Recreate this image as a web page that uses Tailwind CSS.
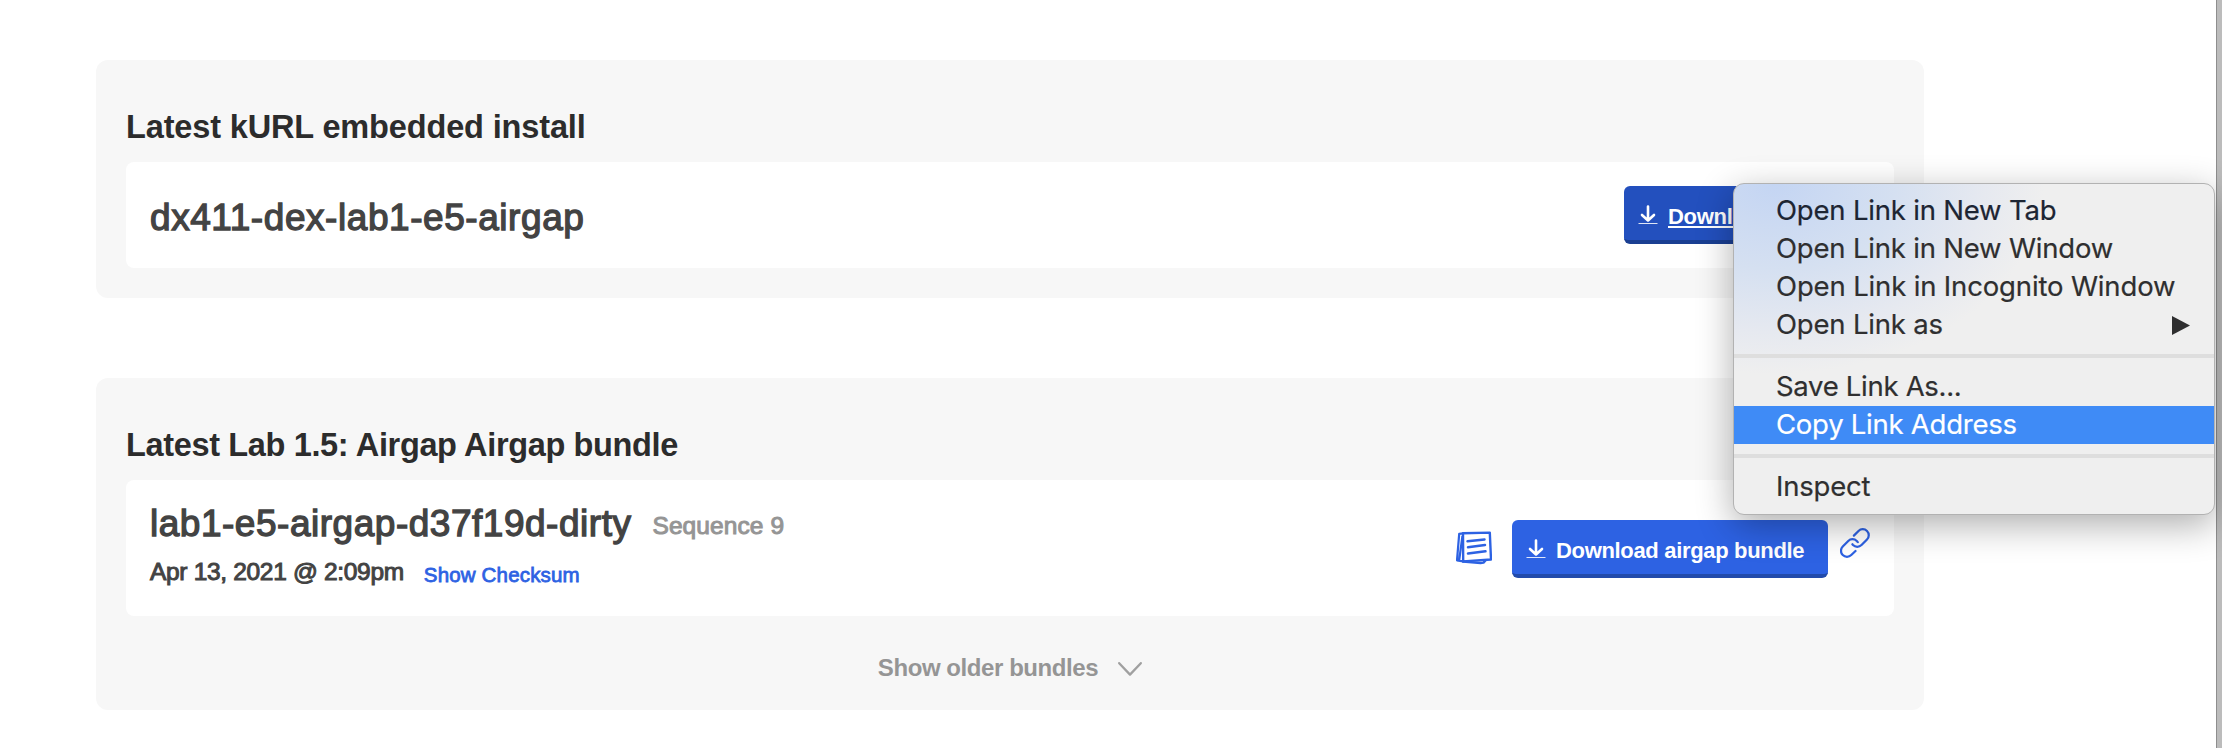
<!DOCTYPE html>
<html lang="en">
<head>
<meta charset="utf-8">
<title>Downloads</title>
<script src="https://cdn.jsdelivr.net/npm/@tailwindcss/browser@4"></script>
</head>
<body class="relative flex h-[748px] w-[2222px] justify-between overflow-hidden bg-white font-['Liberation_Sans',Arial,sans-serif]">

<main class="flex flex-col gap-20 pl-24 pt-[60px]">
  <section class="h-[238px] w-[1828px] rounded-xl bg-[#f7f7f7] px-[30px] pt-[47px]">
    <h2 class="mb-[15px] whitespace-nowrap text-[32.5px] leading-10 font-bold tracking-[-0.14px] text-[#2c2c2c]">Latest kURL embedded install</h2>
    <div class="flex h-[106px] items-center justify-between rounded-lg bg-white px-6">
      <span class="pt-1.5 whitespace-nowrap text-[37px] leading-[44px] tracking-[0.56px] text-[#434343] [-webkit-text-stroke:1.3px_#434343]">dx411-dex-lab1-e5-airgap</span>
      <a class="flex h-[58px] w-[246px] items-center gap-2.5 rounded-md border-b-4 border-[#1a3f92] bg-[#2350be] pl-3.5 text-white">
        <svg class="mt-1 h-5 w-5 shrink-0" viewBox="0 0 20 20" fill="none" stroke="#fff"><path d="M10 1.5v13M4 10l6 5.5 6-5.5" stroke-width="2.6" stroke-linecap="round" stroke-linejoin="round"/><path d="M.5 18.5h19" stroke-width="1" opacity=".85"/></svg>
        <span class="pt-[7px] text-[22px] leading-7 font-bold tracking-[-0.31px] underline decoration-2 underline-offset-[2px]">Download</span>
      </a>
    </div>
  </section>

  <section class="h-[332px] w-[1828px] rounded-xl bg-[#f7f7f7] px-[30px] pt-[47px]">
    <h2 class="mb-[15px] whitespace-nowrap text-[32.5px] leading-10 font-bold tracking-[-0.35px] text-[#2c2c2c]">Latest Lab 1.5: Airgap Airgap bundle</h2>
    <div class="flex h-[136px] justify-between rounded-lg bg-white px-6">
      <div class="flex flex-col gap-2.5 pt-[22px] whitespace-nowrap">
        <div class="flex h-11 items-center gap-[21px]">
          <span class="text-[37px] leading-[44px] tracking-[0.52px] text-[#434343] [-webkit-text-stroke:1.3px_#434343]">lab1-e5-airgap-d37f19d-dirty</span>
          <span class="pt-1 text-[24.5px] leading-8 tracking-[0.1px] text-[#959595] [-webkit-text-stroke:1px_#959595]">Sequence 9</span>
        </div>
        <div class="flex h-8 items-center gap-5">
          <span class="text-[24.5px] leading-8 tracking-[-0.32px] text-[#434343] [-webkit-text-stroke:1px_#434343]">Apr 13, 2021 @ 2:09pm</span>
          <a class="pt-1.5 text-[20.5px] leading-7 tracking-[0.17px] text-[#2d62e3] [-webkit-text-stroke:0.8px_#2d62e3]">Show Checksum</a>
        </div>
      </div>
      <div class="flex items-start pt-10">
        <svg class="mt-[11px] mr-5 h-[34px] w-9" viewBox="0 0 36 34" fill="none" stroke="#2d62e3" stroke-linecap="round" stroke-linejoin="round"><path d="M7 2.3 33.8 1.6 35 28.5 7.2 30.4Z" stroke-width="2.4"/><path d="M7 2.3 3.2 2.8 1 29.3 7.2 30.4M6.4 5.5 3.2 29" stroke-width="2.2"/><path d="M7 30.6 24.5 32 27.5 31.6 29.5 29.4" stroke-width="2.4"/><path d="M11.5 10.3 28.5 8.4M12 16.3 29 14M12 22.5 29.5 20.3" stroke-width="2.5"/></svg>
        <a class="mr-3 flex h-[58px] w-[316px] items-center gap-2.5 rounded-md border-b-4 border-[#224bab] bg-[#2d62e3] pl-3.5 text-white">
          <svg class="mt-1 h-5 w-5 shrink-0" viewBox="0 0 20 20" fill="none" stroke="#fff"><path d="M10 1.5v13M4 10l6 5.5 6-5.5" stroke-width="2.6" stroke-linecap="round" stroke-linejoin="round"/><path d="M.5 18.5h19" stroke-width="1" opacity=".85"/></svg>
          <span class="pt-[7px] whitespace-nowrap text-[22px] leading-7 font-bold tracking-[-0.33px]">Download airgap bundle</span>
        </a>
        <svg class="mt-2 h-[30px] w-[30px]" viewBox="0 0 24 24" fill="none" stroke="#2d62e3" stroke-width="1.8" stroke-linecap="round" stroke-linejoin="round"><path d="M11.1 6.1 14.8 2.4a4.8 4.8 0 0 1 6.8 6.8l-4.4 4.4a4.8 4.8 0 0 1-6.8 0l-.5-.6"/><path d="M12.4 18.4 9 21.6a4.8 4.8 0 0 1-6.8-6.8l4.4-4.4a4.8 4.8 0 0 1 6.8 0l.8.9"/></svg>
      </div>
    </div>
    <div class="mt-9 flex h-8 items-center justify-center gap-5 text-[#959595]">
      <span class="whitespace-nowrap text-2xl leading-8 font-bold tracking-[-0.43px]">Show older bundles</span>
      <svg class="mt-0.5 h-[14px] w-6" viewBox="0 0 24 14" fill="none" stroke="#a0a0a0" stroke-width="2.3" stroke-linecap="round" stroke-linejoin="round"><path d="M1.2 1.2 12 12.6 22.8 1.2"/></svg>
    </div>
  </section>
</main>

<!-- edge of the window behind -->
<div class="h-full w-1.5 border-l border-[#8e8e8e] bg-[#bcbcbc]"></div>

<!-- context menu -->
<div class="absolute top-[183px] left-[1733px] w-[482px] rounded-[11px] border border-[#b2b2b2] bg-[#efefef] bg-[radial-gradient(ellipse_270px_190px_at_40px_0px,#c4d5f3_0%,#d5e0f1_45%,#e6e9f0_78%,#efefef_100%)] py-2 font-[Inter,sans-serif] text-[27.5px] leading-[36px] tracking-[-0.2px] whitespace-nowrap text-[#2f2f30] shadow-[0_10px_36px_rgba(0,0,0,0.32)] [-webkit-text-stroke:0.2px]">
  <div class="h-[38px] pl-[42px] text-[#1d2533]">Open Link in New Tab</div>
  <div class="h-[38px] pl-[42px]">Open Link in New Window</div>
  <div class="h-[38px] pl-[42px] tracking-[-0.15px]">Open Link in Incognito Window</div>
  <div class="flex h-[38px] items-start justify-between pr-6 pl-[42px]"><span>Open Link as</span>
    <svg class="mt-[10px] h-[19px] w-[18px]" viewBox="0 0 18 19"><path d="M0 0 18 9.5 0 19Z" fill="#2f2f30"/></svg></div>
  <div class="my-2.5 h-1 bg-[#dedede]"></div>
  <div class="h-[38px] pl-[42px] tracking-[-0.3px]">Save Link As...</div>
  <div class="h-[38px] bg-[#3f8bf6] pl-[42px] tracking-[-0.25px] text-white">Copy Link Address</div>
  <div class="my-2.5 h-1 bg-[#dedede]"></div>
  <div class="h-[38px] pl-[42px]">Inspect</div>
</div>
</body>
</html>
